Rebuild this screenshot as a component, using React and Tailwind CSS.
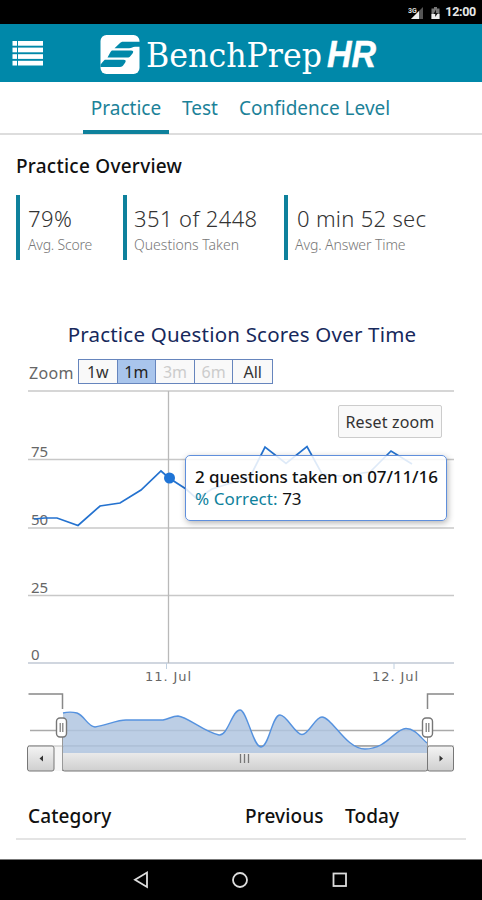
import React from 'react';

const stats = [
  { value: '79%', label: 'Avg. Score', box: 'w-[107px] pl-[8px]', valueClass: 'pl-0 tracking-[0.5px]', labelClass: 'tracking-[-0.2px]' },
  { value: '351 of 2448', label: 'Questions Taken', box: 'w-[161px] pl-[7px]', valueClass: 'pl-0 tracking-[0.4px]', labelClass: '' },
  { value: '0 min 52 sec', label: 'Avg. Answer Time', box: 'w-[170px] pl-[7px]', valueClass: 'pl-[2px] tracking-[0.3px]', labelClass: 'tracking-[-0.1px]' },
];

const ranges = [
  { label: '1w', className: 'bg-[#f9f9f9] text-[#333]' },
  { label: '1m', className: 'bg-[#a9c5ec] text-[#222]' },
  { label: '3m', className: 'bg-[#f9f9f9] text-[#ccc]' },
  { label: '6m', className: 'bg-[#f9f9f9] text-[#ccc]' },
  { label: 'All', className: 'bg-[#f9f9f9] text-[#333]' },
];

const gridLines = [
  { y: 7, label: '' },
  { y: 75.5, label: '75' },
  { y: 144, label: '50' },
  { y: 211.5, label: '25' },
  { y: 279, label: '0' },
];

const StatusBar = () => (
  <div className="flex h-6 items-center justify-end bg-black pt-px pr-[6px] text-[#e8e8e8]">
    <svg width="17" height="14" viewBox="0 0 17 14" className="mr-[6px]">
      <path d="M15 1v12H3z" fill="#555" />
      <path d="M11 5v8H3z" fill="#eee" />
      <text x="0" y="6.500" fontSize="7" fontWeight="700" fill="#ddd" fontFamily="Roboto, sans-serif">3G</text>
    </svg>
    <svg width="9" height="14" viewBox="0 0 9 14" className="mr-[5px]">
      <path d="M3 1h3v1.500h2.500V13H.5V2.500H3z" fill="#777" />
      <path d="M.5 8h8v5h-8z" fill="#eee" />
      <path d="M5 3.500L2.500 8h1.700v3L7 7H5z" fill="#111" />
    </svg>
    <span className="font-['Roboto',sans-serif] text-[12.5px] leading-none font-bold tracking-[-0.3px]">12:00</span>
  </div>
);

const Header = () => (
  <header className="flex h-[58px] items-center bg-[#0088a9]">
    <svg width="31" height="25" viewBox="0 0 31 25" fill="#fff" className="ml-3">
      {[0, 6.6, 13.2, 19.8].map((y) => (
        <g key={y}>
          <rect x="0.500" y={y} width="4.500" height="4.700" />
          <rect x="6" y={y} width="25" height="4.700" />
        </g>
      ))}
    </svg>
    <svg width="280" height="44" viewBox="0 0 280 44" className="ml-[56px]">
      <rect x="1.500" y="4" width="39" height="39" rx="6" fill="#fff" />
      <g fill="#0088a9">
        <path d="M41 10.800H24.500c-2 0-3 .5-4 1.700L15.500 17.200H30c3 0 3.500-1.500 6-1.500h5z" />
        <path d="M13.500 19.500H32c2.200 0 2.800 1 1.700 2.700L31.500 25c-.9 1.200-1.700 1.600-3.300 1.600H8.500l3-5.500c.6-1.100 1-1.600 2-1.600z" />
        <path d="M6.500 28.800H24.500c2.200 0 2.800 1 1.700 2.700L24.300 34.300c-.9 1.200-1.700 1.700-3.300 1.700H1.500v-2.500l3-3.500c.7-.8 1.100-1.200 2-1.200z" />
      </g>
      <text x="47" y="35.800" fontSize="34" fill="#fff" fontFamily="'DejaVu Serif', serif" textLength="176" lengthAdjust="spacingAndGlyphs">BenchPrep</text>
      <text x="228" y="36" fontSize="36" fontWeight="700" fontStyle="italic" fill="#fff" stroke="#fff" strokeWidth="0.500" fontFamily="'Liberation Sans', sans-serif" textLength="49" lengthAdjust="spacingAndGlyphs">HR</text>
    </svg>
  </header>
);

const Tabs = () => (
  <nav className="flex h-[53px] border-b-2 border-[#ddd] pl-[83px] text-[19px] leading-[52px] text-[#1c8299]">
    <a className="h-[52px] w-[86px] border-b-[4px] border-[#0e819c] text-center">Practice</a>
    <a className="ml-[13px] w-[36px]">Test</a>
    <a className="ml-[21px]">Confidence Level</a>
  </nav>
);

const Stats = () => (
  <div className="mt-[15px] ml-4 flex">
    {stats.map((stat) => (
      <div key={stat.label} className={`h-[65px] border-l-[4px] border-[#0e819c] ${stat.box}`}>
        <div className={`pt-[8px] text-[22px] leading-[30px] font-light whitespace-nowrap text-[#333] ${stat.valueClass}`}>
          {stat.value}
        </div>
        <div className={`pt-px text-[14px] leading-[22px] font-light whitespace-nowrap text-[#777] ${stat.labelClass}`}>
          {stat.label}
        </div>
      </div>
    ))}
  </div>
);

const RangeSelector = () => (
  <div className="mt-[11px] ml-[29px] flex h-[25px] items-center">
    <span className="w-[49px] pt-[3px] text-[16px] leading-5 tracking-[0.3px] text-[#666]">Zoom</span>
    <div className="flex border border-[#6685bd]">
      {ranges.map((range) => (
        <button
          key={range.label}
          className={`h-[23px] w-[38.6px] border-r border-[#6685bd] text-[16px] leading-[22px] last:border-r-0 ${range.className}`}
        >
          {range.label}
        </button>
      ))}
    </div>
  </div>
);

const Plot = () => (
  <div className="relative h-[301px]">
    <svg width="482" height="301" viewBox="0 0 482 301" fontFamily="'Noto Sans', sans-serif">
      {gridLines.map((line) => (
        <g key={line.y}>
          <line x1="28" x2="454" y1={line.y} y2={line.y} stroke={line.label === '0' ? '#c0c8d4' : '#c8c8c8'} strokeWidth="1.500" />
          <text x="31" y={line.y - 3} fontSize="15" fill="#666">{line.label}</text>
        </g>
      ))}
      <line x1="168.500" x2="168.500" y1="7" y2="279" stroke="#b9b9b9" strokeWidth="1.300" />
      <path d="M166.500 279v6M394 279v6" stroke="#c0d0e0" />
      <polyline
        points="34,135 45,134 57,134 78,141.500 100,122 120,119 141,106 161,87 169,94 186,105 197,115 212,105 250,93 265,63 286,79.500 307,62.500 322,90 340,92 370,88 391,67 412,80"
        fill="none"
        stroke="#2472cf"
        strokeWidth="1.700"
      />
      <circle cx="169.500" cy="94" r="5.500" fill="#1f74d6" />
      <g fontSize="13" fill="#666" fontFamily="'DejaVu Sans', sans-serif">
        <text x="145" y="296.500" textLength="46">11. Jul</text>
        <text x="372" y="296.500" textLength="46">12. Jul</text>
      </g>
    </svg>
    <button className="absolute top-[21px] left-[338px] h-[33px] w-[104px] rounded-[2px] border border-[#ccc] bg-[#f9f9f9] text-[16px] leading-[32px] tracking-[0.15px] whitespace-nowrap text-[#333]">
      Reset zoom
    </button>
    <div className="absolute top-[71px] left-[185px] h-[66px] w-[262px] rounded-[5px] border-[1.500px] border-[#5f8fdc] bg-white/85 pt-[10px] pl-[9px] text-[17px] leading-[22px] whitespace-nowrap text-[#111] shadow-[1px_2px_6px_rgba(0,0,0,0.3)]">
      <div className="font-medium tracking-[-0.1px]">2 questions taken on 07/11/16</div>
      <div>
        <span className="tracking-[0.1px] text-[#0e819c]">% Correct:</span> 73
      </div>
    </div>
  </div>
);

const Handle = ({ x }) => (
  <g>
    <rect x={x - 5} y="33" width="10" height="19" rx="3.500" fill="#fff" stroke="#777" strokeWidth="1.400" />
    <path d={`M${x - 1.3} 38v9M${x + 1.3} 38v9`} stroke="#777" strokeWidth="1.200" />
  </g>
);

const Navigator = () => (
  <svg width="482" height="92" viewBox="0 0 482 92" className="block">
    <defs>
      <linearGradient id="bar" x1="0" x2="0" y1="0" y2="1">
        <stop offset="0" stopColor="#f4f4f4" />
        <stop offset="1" stopColor="#cfcfcf" />
      </linearGradient>
    </defs>
    <path d="M30 45.500H454" stroke="#aaa" strokeWidth="1.400" />
    <rect x="28" y="61" width="426" height="25" fill="#f6f6f6" />
    <path d="M28 61H454" stroke="#bbb" />
    <rect x="62.500" y="61" width="365" height="25" rx="2" fill="url(#bar)" stroke="#777" />
    <path
      d="M63 68V28C67 27 73 27 77 28C85 31 87 41 95 42C107 40 117 35 126 35H163C169 34 172 31 178 31C188 32 204 47 219 50C228 51 232 25 240 25C247 25 253 62 261 62C269 62 272 30 280 30C287 30 295 49.500 302 49.500C309 49.500 315 32 322 32C332 32 346 64 365 64C387 64 395 43.500 406 43.500C415 43.500 421 53 427 58V68Z"
      fill="#b0c6e0"
      fillOpacity="0.85"
    />
    <path
      d="M63 28C67 27 73 27 77 28C85 31 87 41 95 42C107 40 117 35 126 35H163C169 34 172 31 178 31C188 32 204 47 219 50C228 51 232 25 240 25C247 25 253 62 261 62C269 62 272 30 280 30C287 30 295 49.500 302 49.500C309 49.500 315 32 322 32C332 32 346 64 365 64C387 64 395 43.500 406 43.500C415 43.500 421 53 427 58"
      fill="none"
      stroke="#5592df"
      strokeWidth="1.400"
    />
    <path d="M28.500 9H62.500V24M454 9H427.500V24" fill="none" stroke="#888" strokeWidth="1.500" />
    <path d="M62.500 52v34M427.500 52v34" stroke="#999" />
    <rect x="27.500" y="61" width="26.500" height="25" rx="2" fill="url(#bar)" stroke="#777" />
    <rect x="427.500" y="61" width="26" height="25" rx="2" fill="url(#bar)" stroke="#777" />
    <path d="M43 70.500v6l-3.500-3zM439.500 70.500v6l3.500-3z" fill="#333" />
    <path d="M240.500 69v9M244.500 69v9M248.500 69v9" stroke="#777" strokeWidth="1.300" />
    <Handle x={61.5} />
    <Handle x={427.5} />
  </svg>
);

const BottomBar = () => (
  <div className="h-[41px] border-t border-[#777] bg-black">
    <svg width="482" height="40" viewBox="0 0 482 40" fill="none" stroke="#ddd" strokeWidth="1.800">
      <path d="M147 12.500v14.500l-12-7.250z" />
      <circle cx="240" cy="20" r="7" />
      <rect x="333.500" y="13.500" width="12.500" height="12.500" />
    </svg>
  </div>
);

const App = () => {
  return (
    <div className="flex h-[900px] w-[482px] flex-col overflow-hidden bg-white font-['Noto_Sans',sans-serif]">
      <StatusBar />
      <Header />
      <Tabs />
      <main className="flex-1">
        <h2 className="mt-[17px] ml-4 text-[19px] leading-7 font-medium tracking-[0.25px] text-[#111]">Practice Overview</h2>
        <Stats />
        <h3 className="mt-[60px] pl-[2px] text-center text-[20.5px] leading-7 tracking-[0.2px] text-[#17295c]">
          Practice Question Scores Over Time
        </h3>
        <RangeSelector />
        <Plot />
        <Navigator />
        <div className="mx-4 mt-[23px] flex h-[40px] border-b-2 border-[#e4e4e4] pl-[12px] text-[19px] leading-[33px] font-medium tracking-[0.1px] text-[#111]">
          <span className="w-[217px]">Category</span>
          <span className="w-[100px]">Previous</span>
          <span>Today</span>
        </div>
      </main>
      <BottomBar />
    </div>
  );
};

export default App;
